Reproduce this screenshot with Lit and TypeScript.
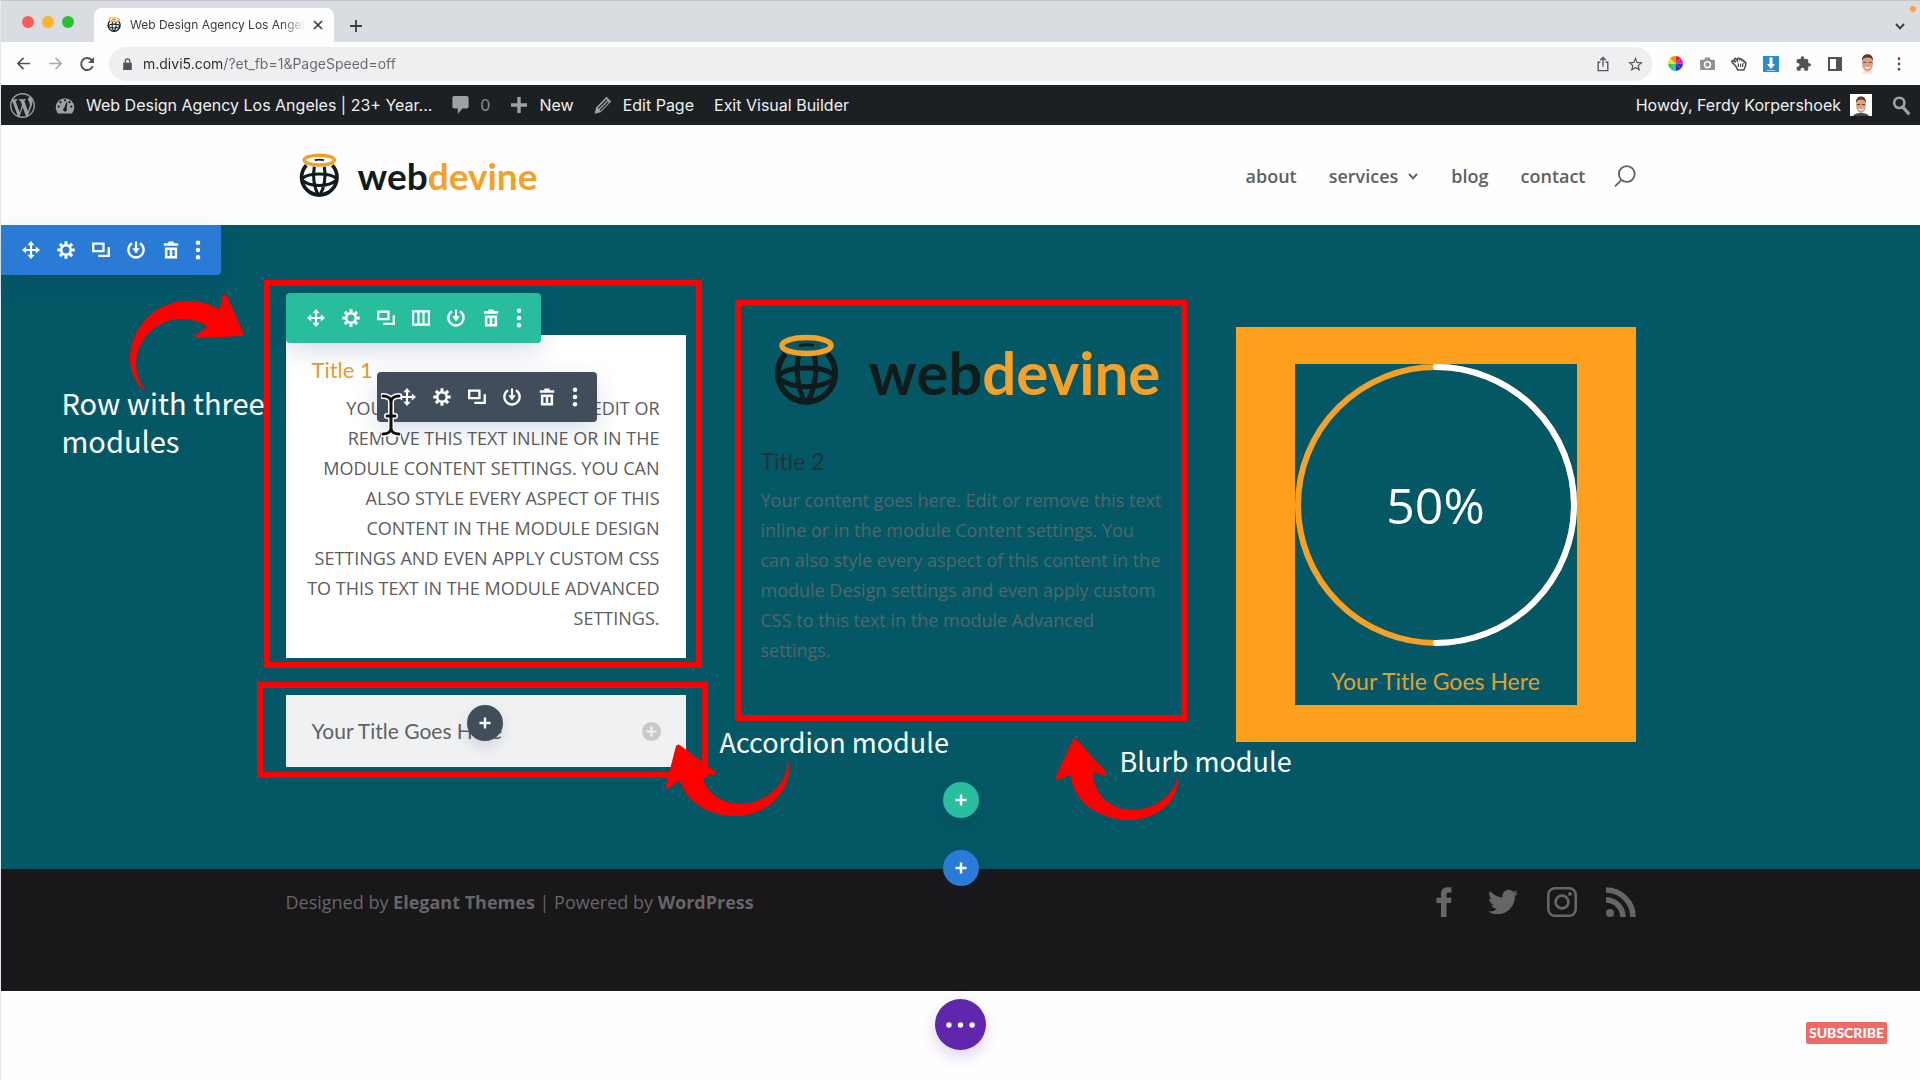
import { LitElement, html, css, svg } from "lit";
import { customElement, property } from "lit/decorators.js";

const ICONS: Record<string, { box: string; art: unknown }> = {
  move: {
    box: "0 0 20 20",
    art: svg`<path d="M10 3v14M3 10h14" fill="none" stroke="currentColor" stroke-width="2.4"/><path d="M10 0l4 4.6H6zM10 20l4-4.6H6zM0 10l4.6-4v8zM20 10l-4.6-4v8z"/>`,
  },
  gear: {
    box: "0 0 20 20",
    art: svg`<circle cx="10" cy="10" r="5.3" fill="none" stroke="currentColor" stroke-width="2.8"/><g stroke="currentColor" stroke-width="3.4"><path d="M10 .3v4M10 15.700v4M.3 10h4M15.700 10h4M3.200 3.200l2.700 2.700M14.100 14.100l2.700 2.700M3.200 16.800l2.700-2.700M14.100 5.900l2.700-2.700"/></g>`,
  },
  copy: {
    box: "0 0 20 20",
    art: svg`<path d="M1.300 3h11.400v8.200H1.300z" fill="none" stroke="currentColor" stroke-width="2.600"/><path d="M7 16.600h11.600V7" fill="none" stroke="currentColor" stroke-width="2.600"/>`,
  },
  columns: {
    box: "0 0 20 20",
    art: svg`<path d="M1.200 2.700h17.600v14.600H1.200zM7.200 2.700v14.600M12.800 2.700v14.600" fill="none" stroke="currentColor" stroke-width="2.400"/>`,
  },
  power: {
    box: "0 0 20 20",
    art: svg`<path d="M5.600 2.600a8.500 8.500 0 1 0 8.800 0" fill="none" stroke="currentColor" stroke-width="2.600"/><path d="M10 .500v9" stroke="currentColor" stroke-width="2.400"/><path d="M5.800 8h8.400L10 13.800z"/>`,
  },
  trash: {
    box: "0 0 20 20",
    art: svg`<path d="M7 .500h6v2h5v2.800H2V2.500h5z"/><path fill-rule="evenodd" d="M3.200 7.200h13.600V19.500H3.200zM6 10v6.600h2.600V10zM11.400 10v6.600H14V10z"/>`,
  },
  dots: {
    box: "0 0 6 22",
    art: svg`<circle cx="3" cy="3" r="2.500"/><circle cx="3" cy="11" r="2.500"/><circle cx="3" cy="19" r="2.500"/>`,
  },
  plus: { box: "0 0 12 12", art: svg`<path d="M6 .500v11M.500 6h11" fill="none" stroke="currentColor" stroke-width="2.400"/>` },
  thinPlus: { box: "0 0 12 12", art: svg`<path d="M6 0v12M0 6h12" fill="none" stroke="currentColor" stroke-width="1.800"/>` },
  close: { box: "0 0 12 12", art: svg`<path d="M2 2l8 8M10 2l-8 8" fill="none" stroke="currentColor" stroke-width="1.700"/>` },
  back: { box: "0 0 16 16", art: svg`<path d="M15 8H2M8 2L2 8l6 6" fill="none" stroke="currentColor" stroke-width="1.800"/>` },
  forward: { box: "0 0 16 16", art: svg`<path d="M1 8h13M8 2l6 6-6 6" fill="none" stroke="currentColor" stroke-width="1.800"/>` },
  reload: { box: "0 0 16 16", art: svg`<path d="M13.800 10A6 6 0 1 1 12.500 3.900L14 5.400" fill="none" stroke="currentColor" stroke-width="1.900"/><path d="M15 1v6H9z"/>` },
  lock: { box: "0 0 10 14", art: svg`<path d="M0 5.500h10V14H0z"/><path d="M2.400 6V3.600a2.600 2.600 0 0 1 5.200 0V6" fill="none" stroke="currentColor" stroke-width="1.500"/>` },
  chevron: { box: "0 0 12 12", art: svg`<path d="M2 4l4 4.300L10 4" fill="none" stroke="currentColor" stroke-width="1.900"/>` },
  share: { box: "0 0 16 18", art: svg`<path d="M5 7H2.500v9.500h11V7H11M8 12V2M4.800 4.800L8 1.600l3.200 3.200" fill="none" stroke="currentColor" stroke-width="1.500"/>` },
  star: { box: "2 2 20 19", art: svg`<path d="M22 9.240l-7.190-.620L12 2 9.190 8.630 2 9.240l5.460 4.730L5.820 21 12 17.270 18.180 21l-1.630-7.030L22 9.240zM12 15.400l-3.760 2.270 1-4.280-3.320-2.880 4.380-.380L12 6.100l1.710 4.040 4.380.380-3.320 2.880 1 4.280L12 15.400z"/>` },
  wheel: {
    box: "-8 -8 16 16",
    art: svg`<path fill="#e8261c" d="M0 0V-8A8 8 0 0 1 5.700-5.700z"/><path fill="#e020c8" d="M0 0L5.700-5.700A8 8 0 0 1 8 0z"/><path fill="#5a23c8" d="M0 0H8A8 8 0 0 1 5.700 5.700z"/><path fill="#2430c0" d="M0 0L5.700 5.700A8 8 0 0 1 0 8z"/><path fill="#27b5e8" d="M0 0V8A8 8 0 0 1-5.700 5.700z"/><path fill="#2fd03a" d="M0 0L-5.700 5.700A8 8 0 0 1-8 0z"/><path fill="#f0e128" d="M0 0H-8A8 8 0 0 1-5.700-5.700z"/><path fill="#f08a1e" d="M0 0L-5.700-5.700A8 8 0 0 1 0-8z"/>`,
  },
  camera: { box: "0 0 16 14", art: svg`<path fill-rule="evenodd" d="M1 3h3.500L5.500.500h5L11.500 3H15a1 1 0 0 1 1 1v9a1 1 0 0 1-1 1H1a1 1 0 0 1-1-1V4a1 1 0 0 1 1-1zm7 1.300a4 4 0 1 0 0 8 4 4 0 0 0 0-8zm0 1.700a2.300 2.300 0 1 1 0 4.600A2.300 2.300 0 0 1 8 6z"/>` },
  hand: { box: "0 0 18 16", art: svg`<path d="M5 10L1.200 6.200C0 4.800 1.700 3.500 2.900 4.500L5 6.200 3.600 3C3.200 1.500 5 1 5.600 2.200L7 4.200C6.700 1 9 .600 9.400 2.200l.3 1.600C10 1.600 12.300 1.600 12.400 3.400v1.300c.6-1.500 2.500-1 2.500.600v1c.9-1 2.200-.3 2 1-.2 3-.8 5-2.400 7.500H7.500z" fill="none" stroke="currentColor" stroke-width="1.800"/><path d="M8.300 7.500v4M10.800 7.500v4M13.200 7.500v4" stroke="currentColor" stroke-width="1.400"/>` },
  download: { box: "0 0 16 16", art: svg`<path fill="#2e8bcb" d="M0 0h16v16H0z"/><path fill="#fff" d="M6.500 1.500h3V8H12l-4 5-4-5h2.500z"/><path fill="#a8d3f0" d="M4 14h8v1H4z"/>` },
  puzzle: { box: "1 1 22 21", art: svg`<path d="M20.500 11H19V7c0-1.100-.9-2-2-2h-4V3.500C13 2.120 11.880 1 10.500 1S8 2.120 8 3.500V5H4c-1.100 0-1.990.9-1.990 2v3.800H3.500c1.490 0 2.700 1.210 2.700 2.700s-1.210 2.700-2.700 2.700H2V20c0 1.100.9 2 2 2h3.800v-1.500c0-1.490 1.210-2.700 2.700-2.700 1.490 0 2.700 1.210 2.700 2.700V22H17c1.100 0 2-.9 2-2v-4h1.500c1.380 0 2.500-1.120 2.500-2.500S21.880 11 20.500 11z"/>` },
  panel: { box: "0 0 14 14", art: svg`<path fill-rule="evenodd" d="M0 0h14v14H0zM2 2v10h6V2z"/>` },
  face: {
    box: "0 0 20 24",
    art: svg`<path fill="#f3e3da" d="M4 24c0-3 2-4 6-4s6 1 6 4z"/><ellipse cx="10" cy="12" rx="6.500" ry="9.500" fill="#dda184"/><path fill="#5a3826" d="M3.500 9C3 4 6 1 10 1s7 3 6.500 8C15.500 6.500 14 5 10 5S4.500 6.500 3.500 9z"/><path d="M4.500 10.500h4.300M11.200 10.500h4.300" stroke="#6b4433" stroke-width="1.300"/><path d="M7 16.500q3 2 6 0" fill="none" stroke="#fff" stroke-width="1.400"/>`,
  },
  portrait: {
    box: "0 0 22 22",
    art: svg`<path fill="#fff" d="M0 0h22v22H0z"/><path fill="#3b4654" d="M3 22c1-2 4-3 8-3s7 1 8 3z"/><ellipse cx="11" cy="11.500" rx="5" ry="7.500" fill="#dda184"/><path fill="#5a3826" d="M6 9C5.500 5 8 2.500 11 2.500S16.500 5 16 9C15 7 14 5.500 11 5.500S7 7 6 9z"/><path d="M7 10.500h3.200M11.800 10.500H15" stroke="#6b4433" stroke-width="1.100"/><path d="M8.700 15q2.300 1.600 4.600 0" fill="none" stroke="#fff" stroke-width="1.200"/>`,
  },
  kebab: { box: "0 0 4 16", art: svg`<circle cx="2" cy="2" r="1.600"/><circle cx="2" cy="8" r="1.600"/><circle cx="2" cy="14" r="1.600"/>` },
  wordpress: {
    box: "0 0 20 20",
    art: svg`<path d="M20 10c0-5.510-4.490-10-10-10C4.480 0 0 4.490 0 10c0 5.520 4.480 10 10 10 5.510 0 10-4.480 10-10zM7.780 15.370L4.370 6.220c.55-.02 1.170-.08 1.170-.08.5-.06.44-1.130-.06-1.110 0 0-1.450.11-2.370.11-.18 0-.37 0-.58-.01C4.120 2.690 6.870 1.110 10 1.110c2.330 0 4.450.87 6.050 2.340-.68-.11-1.650.39-1.650 1.580 0 .74.45 1.360.9 2.100.35.61.55 1.360.55 2.460 0 1.490-1.400 5-1.400 5l-3.030-8.370c.54-.02.82-.17.82-.17.5-.05.44-1.250-.06-1.220 0 0-1.440.12-2.380.12-.87 0-2.330-.12-2.330-.12-.5-.03-.56 1.200-.06 1.220l.92.08 1.260 3.410zM17.410 10c.24-.64.74-1.870.43-4.250.7 1.290 1.050 2.710 1.050 4.250 0 3.290-1.730 6.240-4.400 7.780.97-2.590 1.940-5.200 2.920-7.780zM6.100 18.090C3.120 16.650 1.110 13.530 1.110 10c0-1.300.23-2.480.72-3.590C3.250 10.300 4.670 14.200 6.100 18.090zm4.030-6.630l2.580 6.980c-.86.29-1.760.45-2.710.45-.79 0-1.570-.11-2.290-.33.81-2.380 1.620-4.740 2.420-7.100z"/>`,
  },
  dashboard: {
    box: "0 0 20 18",
    art: svg`<path d="M2.500 17.500A9.800 9.800 0 1 1 17.500 17.500z"/><g fill="#1d2023"><circle cx="10" cy="3.500" r="1.200"/><circle cx="5.300" cy="5.500" r="1.200"/><circle cx="14.700" cy="5.500" r="1.200"/><circle cx="3.300" cy="10.300" r="1.200"/><circle cx="16.700" cy="10.300" r="1.200"/><path d="M11.600 5.500l.9.3-.7 6.700a2 2 0 1 1-2.700-.8z"/></g>`,
  },
  comment: { box: "0 0 18 20", art: svg`<path d="M2 0h14a2 2 0 0 1 2 2v10a2 2 0 0 1-2 2h-5l-5 6v-6H2a2 2 0 0 1-2-2V2a2 2 0 0 1 2-2z"/>` },
  adminPlus: { box: "0 0 18 18", art: svg`<path d="M7.300 1h3.400v6.300H17v3.400h-6.300V17H7.300v-6.300H1V7.300h6.300z"/>` },
  pencil: { box: "0 0 18 18", art: svg`<path fill-rule="evenodd" d="M12.500.800l4.700 4.700L6.600 16.200.600 17.700l1.500-6.200zM12.500 3.300l-8.600 8.600.9.900 8.600-8.600zM14 5.600l-8.500 8.500.8.800 8.500-8.500z"/>` },
  adminSearch: { box: "0 0 18 20", art: svg`<circle cx="7.200" cy="7.200" r="5.400" fill="none" stroke="currentColor" stroke-width="2.800"/><path d="M10.800 11.500l6 6.800" stroke="currentColor" stroke-width="3.400" stroke-linecap="round"/>` },
  search: { box: "0 0 22 22", art: svg`<circle cx="12.800" cy="9" r="7.900" fill="none" stroke="currentColor" stroke-width="1.800"/><path d="M7.500 14.800L1 21.300" stroke="currentColor" stroke-width="1.800"/>` },
  facebook: { box: "0 0 30 30", art: svg`<path d="M12 30V16H7.500v-5.200H12V7.500C12 2.600 14.400.200 18.800.200H22.500v5.300h-2.600c-2 0-2.400.8-2.400 2.400v2.900h5L22 16h-4.500v14z"/>` },
  twitter: { box: "0 2 24 20", art: svg`<path d="M23.953 4.570a10 10 0 01-2.825.775 4.958 4.958 0 002.163-2.723c-.951.555-2.005.959-3.127 1.184a4.920 4.920 0 00-8.384 4.482C7.690 8.095 4.067 6.130 1.640 3.162a4.822 4.822 0 00-.666 2.475c0 1.710.87 3.213 2.188 4.096a4.904 4.904 0 01-2.228-.616v.06a4.923 4.923 0 003.946 4.827 4.996 4.996 0 01-2.212.085 4.936 4.936 0 004.604 3.417 9.867 9.867 0 01-6.102 2.105c-.39 0-.779-.023-1.170-.067a13.995 13.995 0 007.557 2.209c9.053 0 13.998-7.496 13.998-13.985 0-.21 0-.42-.015-.63A9.935 9.935 0 0024 4.590z"/>` },
  instagram: { box: "0 0 30 30", art: svg`<rect x="1.300" y="1.300" width="27.400" height="27.400" rx="6.500" fill="none" stroke="currentColor" stroke-width="2.600"/><circle cx="15" cy="15" r="6.400" fill="none" stroke="currentColor" stroke-width="2.700"/><circle cx="23" cy="7" r="1.900"/>` },
  rss: { box: "0 0 30 30", art: svg`<circle cx="4" cy="26" r="4"/><path d="M0 13a17 17 0 0 1 17 17M0 3a27 27 0 0 1 27 27" fill="none" stroke="currentColor" stroke-width="5.600"/>` },
  ellipsis: { box: "0 0 30 6", art: svg`<circle cx="3" cy="3" r="2.800"/><circle cx="15" cy="3" r="2.800"/><circle cx="27" cy="3" r="2.800"/>` },
  globe: {
    box: "0 0 66 76",
    art: svg`<g fill="none" stroke="#101c1c"><path stroke-width="6" d="M12.500 19.800A28.600 28.600 0 1 0 54.500 19.800"/><path stroke-width="5" d="M25.500 22C22.500 36 24.500 56 33 70M41.500 22C44.500 36 42.500 56 33 70M6 41C16 31.500 51 31.500 61 41M6 44C18 55.500 49 55.500 61 44"/><path stroke-width="3" d="M26 11.500q7.500-1.500 15 0"/></g><ellipse cx="33.500" cy="11.500" rx="24.500" ry="8" fill="none" stroke="#f5a128" stroke-width="5.600"/>`,
  },
};

@customElement("ui-icon")
class UiIcon extends LitElement {
  @property() name = "";
  @property({ type: Number }) w = 18;
  @property({ type: Number }) h = 18;
  static styles = css`
    :host { display: inline-flex; flex: none; }
    .art { display: block; fill: currentColor; overflow: visible; }
  `;
  render() {
    const i = ICONS[this.name];
    return html`<svg class="art" width=${this.w} height=${this.h} viewBox=${i.box} aria-hidden="true">${i.art}</svg>`;
  }
}

@customElement("brand-logo")
class BrandLogo extends LitElement {
  @property({ type: Boolean, reflect: true }) large = false;
  static styles = css`
    :host { display: flex; align-items: center; gap: 18px; font: 700 37px/46px Lato, sans-serif; color: #101c1c; }
    :host([large]) { gap: 30px; font-size: 60px; line-height: 76px; }
    .accent { color: #f5a128; }
  `;
  render() {
    return html`<ui-icon name="globe" w=${this.large ? 66 : 42} h=${this.large ? 76 : 47}></ui-icon>
      <span>web<span class="accent">devine</span></span>`;
  }
}

@customElement("builder-bar")
class BuilderBar extends LitElement {
  @property({ type: Array }) tools: string[] = [];
  @property({ reflect: true }) tone = "section";
  static styles = css`
    :host { display: flex; align-items: center; height: 50px; padding: 0 12px 0 13px; border-radius: 4px; color: #fff; box-shadow: 0 8px 24px rgba(20, 50, 110, 0.16); }
    :host([tone="section"]) { padding: 0 13px 0 12px; background: #297bd6; border-radius: 0 0 4px 0; }
    :host([tone="row"]) { background: #27bd9d; }
    :host([tone="module"]) { background: #424d5c; }
    .tool { display: flex; justify-content: center; align-items: center; width: 35px; height: 50px; padding: 0; border: 0; background: none; color: inherit; }
    .tool.more { width: 20px; }
  `;
  render() {
    return html`${this.tools.map((t) => {
      const more = t === "dots";
      return html`<button class="tool ${more ? "more" : ""}" aria-label=${t}>
        <ui-icon name=${t} w=${more ? 6 : 18} h=${more ? 20 : 18}></ui-icon>
      </button>`;
    })}`;
  }
}

@customElement("app-root")
class AppRoot extends LitElement {
  static styles = css`
    :host { display: block; min-height: 100vh; background: #fefefe; font-family: "Open Sans", sans-serif; color: #666; }
    * { box-sizing: border-box; }
    button { font: inherit; color: inherit; border: 0; padding: 0; background: none; }
    a { color: inherit; text-decoration: none; }
    h2, h3, p { margin: 0; font-weight: 400; }
    .page { border-left: 1px solid #e4e8ea; }
    .container { width: 1350px; max-width: 100%; margin: 0 auto; position: relative; }

    /* browser window */
    .tabs { display: flex; align-items: flex-end; height: 42px; background: #d9dce0; border-top: 1px solid #c2c6c9; position: relative; color: #3a3c40; }
    .lights { display: flex; gap: 8px; padding: 0 20px 14px 21px; }
    .light { width: 12px; height: 12px; border-radius: 50%; }
    .red { background: #fb5b54; }
    .amber { background: #fbb32d; }
    .green { background: #27c138; }
    .tab { display: flex; align-items: center; width: 240px; height: 34px; padding: 0 10px 0 13px; border-radius: 8px 8px 0 0; background: #fefefe; font: 12px/20px Inter, sans-serif; }
    .tab-title { flex: 1; margin-left: 9px; white-space: nowrap; -webkit-mask-image: linear-gradient(to right, #000 86%, transparent); mask-image: linear-gradient(to right, #000 86%, transparent); }
    .tab-close { display: flex; margin-left: 6px; }
    .new-tab { display: flex; margin: 0 auto 10px 16px; }
    .tab-menu { display: flex; margin: 0 14px 10px 0; }
    .notice { position: absolute; right: 4px; top: 5px; width: 6px; height: 6px; border-radius: 50%; background: #f2a33c; }
    .toolbar { display: flex; align-items: center; height: 43px; padding: 0 5px 0 6px; background: #fefefe; color: #505357; }
    .tool { display: flex; justify-content: center; align-items: center; flex: none; width: 32px; height: 32px; }
    .faded { color: #a9abae; }
    .soft { color: #8f9193; }
    .address { display: flex; align-items: center; flex: 1; height: 34px; margin: 0 7px 0 6px; padding: 0 1px 0 14px; border-radius: 17px; background: #efeff1; }
    .url { flex: 1; height: 30px; margin-left: 11px; padding: 0; border: 0; outline: 0; font: 14px/30px Inter, sans-serif; color: #5c5e61; background: linear-gradient(to right, #26282b 79px, #66686c 79px); -webkit-background-clip: text; background-clip: text; -webkit-text-fill-color: transparent; }

    /* admin bar */
    .admin { display: flex; align-items: center; gap: 20px; height: 40px; padding: 0 10px 0 9px; background: #1d2023; color: #eef0f1; font: 16px/40px Inter, sans-serif; }
    .admin-item { display: flex; align-items: center; gap: 11px; white-space: nowrap; }
    .admin ui-icon { color: #9ca1a6; }
    .count { color: #888d92; }
    .push { margin-left: auto; gap: 9px; }

    /* site header */
    .header { display: flex; align-items: center; justify-content: space-between; height: 100px; padding: 2px 0 0 12px; }
    .nav { display: flex; align-items: center; gap: 32px; font: 600 18px/24px "Open Sans", sans-serif; color: #5f5f61; }
    .nav-link { display: flex; align-items: center; gap: 9px; }
    .nav-search { display: flex; margin-left: -4px; }

    /* builder section */
    .section { position: relative; background: #045866; padding: 102px 0 51px; }
    .section-bar { position: absolute; left: 0; top: 0; }
    .row { display: grid; grid-template-columns: repeat(3, 1fr); gap: 75px; align-items: start; }
    .stack { padding-top: 8px; display: grid; gap: 37px; position: relative; }
    .row-bar { position: absolute; left: 0; top: -34px; }
    .card { position: relative; background: #fff; padding: 22px 26px 25px 20px; }
    .title { font: 400 22px/26px Lato, sans-serif; color: #e0a030; }
    .card .title { padding-left: 6px; }
    .copy { font: 400 18px/30px "Open Sans", sans-serif; color: #5c5c5e; }
    .card .copy { margin-top: 10px; text-align: right; text-transform: uppercase; }
    .module-bar { position: absolute; left: 91px; top: 45px; }
    .cursor { position: absolute; left: 95px; top: 66px; }
    .accordion { position: relative; display: flex; align-items: center; justify-content: space-between; width: 100%; height: 72px; padding: 0 25px 0 26px; background: #f0f1f3; font: 21px/26px Lato, sans-serif; color: #606163; }
    .toggle { display: flex; justify-content: center; align-items: center; width: 19px; height: 19px; border-radius: 50%; background: #c6c8c9; color: #f0f1f3; }
    .adder { display: flex; justify-content: center; align-items: center; width: 36px; height: 36px; border-radius: 50%; color: #fff; box-shadow: 0 6px 14px rgba(20, 40, 90, 0.14); }
    .add-module { position: absolute; left: 181px; top: 378px; background: #424d5c; }
    .add-row { margin: 15px auto 0; background: #27bd9d; }
    .add-section { position: absolute; left: 50%; bottom: -17px; margin-left: -18px; background: #297bd6; z-index: 1; }
    .blurb { padding-top: 7px; margin-right: -4px; }
    .blurb brand-logo { margin-left: 12px; }
    .blurb .title { margin-top: 38px; color: #203338; font-size: 23px; }
    .blurb .copy { margin-top: 11px; color: #52666b; }
    .counter { padding: 37px 59px; background: #fe9f1d; }
    .counter-body { background: #045866; padding-bottom: 10px; text-align: center; }
    .dial { display: grid; place-items: center; }
    .dial > * { grid-area: 1 / 1; }
    .ring { display: block; width: 100%; }
    .percent { font-size: 50px; line-height: 60px; color: #fff; }
    .counter .title { padding: 22px 0 1px; font-size: 23px; }

    /* callouts lying over the row */
    .frame { position: absolute; border: 6px solid #fe0000; }
    .frame-row { left: -22px; top: -47px; width: 438px; height: 388px; }
    .frame-accordion { left: -29px; top: 355px; width: 451px; height: 96px; }
    .frame-blurb { left: 449px; top: -27px; width: 452px; height: 421px; }
    .note { position: absolute; white-space: nowrap; font: 27px/38px "Noto Sans CJK SC", "Open Sans", sans-serif; color: #fff; }
    .note-row { left: -224px; top: 56px; font-size: 29px; }
    .note-accordion { left: 434px; top: 396px; }
    .note-blurb { left: 834px; top: 415px; }
    .arrow { position: absolute; fill: #fe0000; }
    .arrow-row { left: -158px; top: -35px; }
    .arrow-accordion { left: 378px; top: 415px; }
    .arrow-blurb { left: 768px; top: 410px; }

    /* footer */
    .footer { height: 122px; background: #19171a; color: #666568; font: 18px/26px "Open Sans", sans-serif; }
    .footer-row { display: flex; align-items: center; justify-content: space-between; padding-top: 18px; }
    .social { display: flex; align-items: center; gap: 29px; }
    .social-link { display: flex; }
    .tail { position: relative; display: flex; justify-content: center; height: 89px; padding-top: 8px; }
    .menu { display: flex; justify-content: center; align-items: center; width: 51px; height: 51px; border-radius: 50%; background: #6027ac; color: #fff; box-shadow: 0 6px 16px rgba(90, 40, 170, 0.2); }
    .subscribe { position: absolute; right: 33px; top: 31px; height: 22px; padding: 0 3px; border-radius: 2px; background: #ed6b67; color: #fff; font: 900 14px/22px Lato, sans-serif; }
  `;

  private tool(name: string, w: number, h: number, cls = "") {
    return html`<button class="tool ${cls}" aria-label=${name}><ui-icon name=${name} w=${w} h=${h}></ui-icon></button>`;
  }

  private browser() {
    return html`
      <div class="tabs">
        <div class="lights"><span class="light red"></span><span class="light amber"></span><span class="light green"></span></div>
        <div class="tab">
          <ui-icon name="globe" w="14" h="16"></ui-icon>
          <span class="tab-title">Web Design Agency Los Angel</span>
          <button class="tab-close" aria-label="Close tab"><ui-icon name="close" w="12" h="12"></ui-icon></button>
        </div>
        <button class="new-tab" aria-label="New tab"><ui-icon name="thinPlus" w="12" h="12"></ui-icon></button>
        <button class="tab-menu" aria-label="Tab menu"><ui-icon name="chevron" w="12" h="12"></ui-icon></button>
        <span class="notice"></span>
      </div>
      <div class="toolbar">
        ${this.tool("back", 15, 15)} ${this.tool("forward", 15, 15, "faded")} ${this.tool("reload", 16, 16)}
        <div class="address">
          <ui-icon name="lock" w="9" h="12"></ui-icon>
          <input class="url" aria-label="Address" .value=${"m.divi5.com/?et_fb=1&PageSpeed=off"} />
          ${this.tool("share", 14, 16)} ${this.tool("star", 15, 14)}
        </div>
        ${this.tool("wheel", 15, 15)} ${this.tool("camera", 15, 13, "soft")} ${this.tool("hand", 16, 14)}
        ${this.tool("download", 16, 16)} ${this.tool("puzzle", 15, 15)} ${this.tool("panel", 14, 14)}
        ${this.tool("face", 17, 21)} ${this.tool("kebab", 4, 14)}
      </div>`;
  }

  private admin() {
    return html`
      <nav class="admin">
        <a class="admin-item" href="#" aria-label="WordPress"><ui-icon name="wordpress" w="25" h="25"></ui-icon></a>
        <a class="admin-item" href="#"><ui-icon name="dashboard" w="20" h="17"></ui-icon>Web Design Agency Los Angeles | 23+ Year...</a>
        <a class="admin-item" href="#"><ui-icon name="comment" w="17" h="18"></ui-icon><span class="count">0</span></a>
        <a class="admin-item" href="#"><ui-icon name="adminPlus" w="18" h="18"></ui-icon>New</a>
        <a class="admin-item" href="#"><ui-icon name="pencil" w="18" h="18"></ui-icon>Edit Page</a>
        <a class="admin-item" href="#">Exit Visual Builder</a>
        <a class="admin-item push" href="#">Howdy, Ferdy Korpershoek<ui-icon name="portrait" w="22" h="22"></ui-icon></a>
        <button class="admin-item" aria-label="Search"><ui-icon name="adminSearch" w="18" h="19"></ui-icon></button>
      </nav>`;
  }

  render() {
    return html`
      <div class="page">
        ${this.browser()} ${this.admin()}
        <header class="container header">
          <brand-logo></brand-logo>
          <nav class="nav">
            <a class="nav-link" href="#">about</a>
            <a class="nav-link" href="#">services<ui-icon name="chevron" w="12" h="12"></ui-icon></a>
            <a class="nav-link" href="#">blog</a>
            <a class="nav-link" href="#">contact</a>
            <button class="nav-search" aria-label="Search"><ui-icon name="search" w="22" h="22"></ui-icon></button>
          </nav>
        </header>

        <main class="section">
          <builder-bar class="section-bar" tone="section" .tools=${["move", "gear", "copy", "power", "trash", "dots"]}></builder-bar>
          <div class="container">
            <div class="row">
              <div class="stack">
                <article class="card">
                  <h2 class="title">Title 1</h2>
                  <p class="copy">Your content goes here. Edit or remove this text inline or in the module Content settings. You can also style every aspect of this content in the module Design settings and even apply custom CSS to this text in the module Advanced settings.</p>
                </article>
                <button class="accordion">Your Title Goes Here<span class="toggle"><ui-icon name="plus" w="11" h="11"></ui-icon></span></button>
                <button class="adder add-module" aria-label="Add module"><ui-icon name="plus" w="12" h="12"></ui-icon></button>
                <builder-bar class="row-bar" tone="row" .tools=${["move", "gear", "copy", "columns", "power", "trash", "dots"]}></builder-bar>
                <builder-bar class="module-bar" tone="module" .tools=${["move", "gear", "copy", "power", "trash", "dots"]}></builder-bar>
              </div>
              <article class="blurb">
                <brand-logo large></brand-logo>
                <h2 class="title">Title 2</h2>
                <p class="copy">Your content goes here. Edit or remove this text inline or in the module Content settings. You can also style every aspect of this content in the module Design settings and even apply custom CSS to this text in the module Advanced settings.</p>
              </article>
              <article class="counter">
                <div class="counter-body">
                  <div class="dial">
                    <svg class="ring" viewBox="0 0 282 282" aria-hidden="true">
                      <circle cx="141" cy="141" r="138" fill="none" stroke="#f9a126" stroke-width="6" />
                      <path d="M141 3a138 138 0 0 1 0 276" fill="none" stroke="#fff" stroke-width="6" stroke-linecap="round" />
                    </svg>
                    <span class="percent">50%</span>
                  </div>
                  <h3 class="title">Your Title Goes Here</h3>
                </div>
              </article>
            </div>
            <svg class="cursor" width="20" height="44" viewBox="0 0 20 44" aria-hidden="true">
              <g fill="none" stroke-linecap="round"><path stroke="#fff" stroke-width="6" d="M2 3c4 0 8 2 8 6v26c0 4-4 6-8 6M18 3c-4 0-8 2-8 6M18 41c-4 0-8-2-8-6M6 23h8" /><path stroke="#111" stroke-width="3" d="M2 3c4 0 8 2 8 6v26c0 4-4 6-8 6M18 3c-4 0-8 2-8 6M18 41c-4 0-8-2-8-6M6 23h8" /></g>
            </svg>
            <div class="frame frame-row"></div>
            <div class="frame frame-accordion"></div>
            <div class="frame frame-blurb"></div>
            <svg class="arrow arrow-row" width="117" height="103" viewBox="384 216 351 309" aria-hidden="true">
              <path d="M438 517C405 490 389 452 390 410C394 320 468 244 560 243C600 243 636 254 658 270L667 228Q674 218 682 230L731 342Q732 348 724 348L590 354Q580 351 587 345L622 320C600 306 572 296 545 297C468 298 409 360 408 430C409 465 420 492 438 517Z" />
            </svg>
            <svg class="arrow arrow-accordion" width="130" height="80" viewBox="664 742 130 80" aria-hidden="true">
              <path d="M676 746Q678 743 681 746L716 772Q717 775 713 775L703 774C703 790 719 804 741 804C766 803 787 785 788 760C794 786 771 816 735 816C708 816 685 801 680 780L669 788Q665 790 666 785Z" />
            </svg>
            <svg class="arrow arrow-blurb" width="130" height="90" viewBox="1054 737 130 90" aria-hidden="true">
              <path d="M1072 741Q1075 737 1078 741L1106 772Q1107 777 1102 775L1093 772C1093 794 1110 810 1133 810C1157 809 1176 793 1177 776C1182 797 1160 820 1129 820C1098 820 1072 800 1071 775L1060 779Q1055 781 1056 776Z" />
            </svg>
            <div class="note note-row">Row with three<br />modules</div>
            <div class="note note-accordion">Accordion module</div>
            <div class="note note-blurb">Blurb module</div>
          </div>
          <button class="adder add-row" aria-label="Add row"><ui-icon name="plus" w="12" h="12"></ui-icon></button>
          <button class="adder add-section" aria-label="Add section"><ui-icon name="plus" w="12" h="12"></ui-icon></button>
        </main>

        <footer class="footer">
          <div class="container footer-row">
            <span>Designed by <a href="#"><b>Elegant Themes</b></a> | Powered by <a href="#"><b>WordPress</b></a></span>
            <div class="social">
              <a class="social-link" href="#" aria-label="Facebook"><ui-icon name="facebook" w="30" h="30"></ui-icon></a>
              <a class="social-link" href="#" aria-label="Twitter"><ui-icon name="twitter" w="30" h="26"></ui-icon></a>
              <a class="social-link" href="#" aria-label="Instagram"><ui-icon name="instagram" w="30" h="30"></ui-icon></a>
              <a class="social-link" href="#" aria-label="RSS"><ui-icon name="rss" w="30" h="30"></ui-icon></a>
            </div>
          </div>
        </footer>
        <div class="tail">
          <button class="menu" aria-label="Builder menu"><ui-icon name="ellipsis" w="29" h="6"></ui-icon></button>
          <button class="subscribe">SUBSCRIBE</button>
        </div>
      </div>`;
  }
}
